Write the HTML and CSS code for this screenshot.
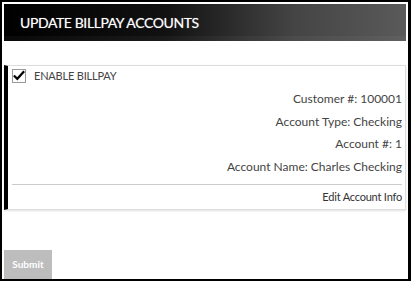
FILE: index.html
```html
<!doctype html>
<html lang="en">
  <head>
    <meta charset="utf-8" />
    <title>Update Billpay Accounts</title>
    <link rel="stylesheet" href="styles.css">
  </head>
  <body>
    <div class="frame">
      <div class="header">
        <h1>Update Billpay Accounts</h1>
      </div>

      <div class="account-card">
        <label class="enable">
          <span class="check">
            <svg width="14" height="12" viewBox="0 0 14 12"><path d="M1 6.5 L5 10.5 L13 1.5" fill="none" stroke="#000" stroke-width="2.6"/></svg>
          </span>
          Enable Billpay
        </label>
        <div class="info">
          <p>Customer #: 100001</p>
          <p>Account Type: Checking</p>
          <p>Account #: 1</p>
          <p>Account Name: Charles Checking</p>
        </div>
        <div class="card-footer">Edit Account Info</div>
      </div>

      <button class="btn" disabled>Submit</button>
    </div>
  </body>
</html>
```

FILE: styles.css
```css
* {
  box-sizing: border-box;
}

body {
  margin: 0;
  font-family: Lato, "Open Sans", Arial, sans-serif;
  background: #fff;
}

.frame {
  width: 411px;
  height: 281px;
  border: 2px solid #000;
  border-right-width: 3px;
  padding: 2px 2px 0 2px;
  display: flex;
  flex-direction: column;
}

.header {
  height: 38px;
  background: linear-gradient(to right, #000 0%, #111 40%, #444 72%, #5a5a5a 100%);
  box-shadow: inset 0 -5px 0 rgba(255, 255, 255, 0.04);
  padding: 0 16px;
  display: flex;
  align-items: center;
}

.header h1 {
  margin: 0;
  font-size: 14px;
  font-weight: 400;
  letter-spacing: -0.4px;
  color: #fff;
  text-transform: uppercase;
  text-shadow: 0 0 1px rgba(255, 255, 255, 0.5);
}

.account-card {
  margin-top: 24px;
  border: 1px solid #ddd;
  border-left: 4px solid #000;
  box-shadow: 0 1px 2px rgba(0, 0, 0, 0.12);
  padding: 3px 3px 0 4px;
}

.enable {
  display: flex;
  align-items: center;
  gap: 8px;
  font-size: 11px;
  color: #444;
  text-transform: uppercase;
  letter-spacing: -0.2px;
}

.check {
  width: 14px;
  height: 14px;
  border: 1px solid #999;
  display: flex;
  align-items: flex-end;
  justify-content: center;
}

.check svg {
  margin-bottom: 1px;
}

.info {
  text-align: right;
  font-size: 12px;
  color: #444;
  padding-top: 5px;
}

.info p {
  margin: 0;
  line-height: 22.7px;
}

.card-footer {
  margin-top: 5px;
  border-top: 1px solid #ccc;
  text-align: right;
  font-size: 11px;
  color: #333;
  padding: 5px 0 6px;
  letter-spacing: -0.2px;
}

.btn {
  margin-top: 40px;
  align-self: flex-start;
  width: 48px;
  height: 30px;
  background: #bdbdbd;
  color: #fff;
  border: none;
  font-family: inherit;
  font-size: 10px;
  font-weight: 700;
  padding: 0;
}
```
